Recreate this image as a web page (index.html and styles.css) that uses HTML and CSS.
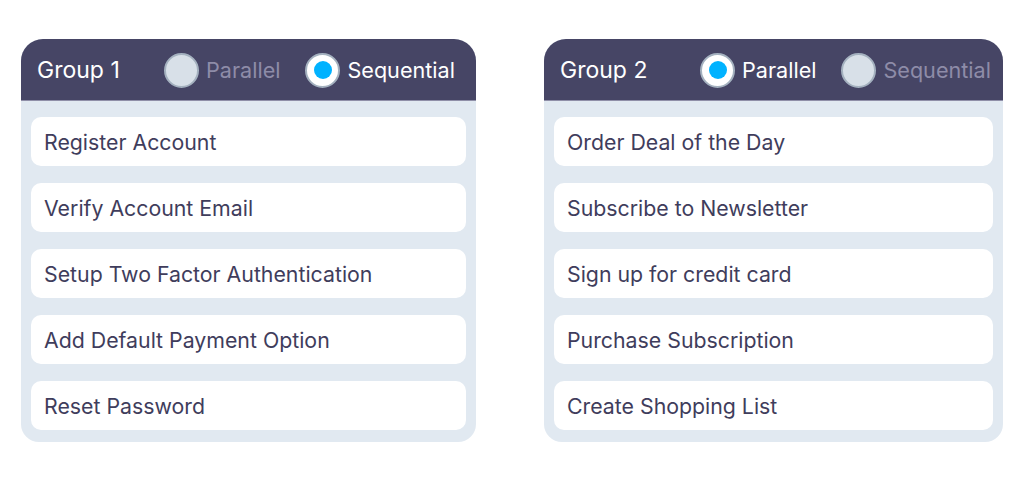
FILE: index.html
```html
<!DOCTYPE html>
<html>
<head>
<meta charset="utf-8">
<link rel="stylesheet" href="styles.css">
</head>
<body>
<div class="page">
  <section class="card card-a">
    <header class="head">
      <span class="title">Group 1</span>
      <div class="radios">
        <label class="radio off"><span class="dot"></span><span class="lbl">Parallel</span></label>
        <label class="radio on"><span class="dot"></span><span class="lbl">Sequential</span></label>
      </div>
    </header>
    <ul class="list">
      <li class="item">Register Account</li>
      <li class="item">Verify Account Email</li>
      <li class="item">Setup Two Factor Authentication</li>
      <li class="item">Add Default Payment Option</li>
      <li class="item">Reset Password</li>
    </ul>
  </section>
  <section class="card card-b">
    <header class="head">
      <span class="title">Group 2</span>
      <div class="radios">
        <label class="radio on"><span class="dot"></span><span class="lbl">Parallel</span></label>
        <label class="radio off"><span class="dot"></span><span class="lbl">Sequential</span></label>
      </div>
    </header>
    <ul class="list">
      <li class="item">Order Deal of the Day</li>
      <li class="item">Subscribe to Newsletter</li>
      <li class="item">Sign up for credit card</li>
      <li class="item">Purchase Subscription</li>
      <li class="item">Create Shopping List</li>
    </ul>
  </section>
</div>
</body>
</html>
```
FILE: styles.css
```css
* { box-sizing: border-box; }
html, body { margin: 0; padding: 0; background: #ffffff; }
body { font-family: "Inter", "Noto Sans", sans-serif; }
.page {
  display: flex;
  padding: 39px 0 0 21px;
  gap: 68px;
  align-items: flex-start;
}
.card {
  background: #e1e9f1;
  border-radius: 22px 22px 18px 18px;
  overflow: hidden;
}
.card-a { width: 455px; }
.card-b { width: 459px; }
.head {
  height: 62px;
  background: #464565;
  display: flex;
  align-items: center;
  padding: 1px 0 0 16px;
  border-bottom: 1px solid #8f8fa8;
}
.title {
  color: #ffffff;
  font-size: 23px;
  width: 84px;
  white-space: nowrap;
}
.card-a .radios { margin-left: 43px; }
.card-b .radios { margin-left: 56px; }
.radios {
  display: flex;
  align-items: center;
  gap: 25px;
}
.radio {
  display: flex;
  align-items: center;
  gap: 7px;
  font-size: 21.6px;
}
.dot {
  flex: none;
  width: 35px;
  height: 35px;
  border-radius: 50%;
  border: 2px solid #a4b1bf;
  background: #d8e0e8;
  position: relative;
}
.on .dot { background: #ffffff; }
.on .dot::after {
  content: "";
  position: absolute;
  left: 50%; top: 50%;
  width: 18px; height: 18px;
  margin: -9px 0 0 -9px;
  border-radius: 50%;
  background: #00b2ff;
}
.on .lbl { color: #ffffff; }
.off .lbl { color: #8e8ca8; }
.list {
  list-style: none;
  margin: 0;
  padding: 16px 10px 12px;
  display: flex;
  flex-direction: column;
  gap: 17px;
}
.item {
  background: #ffffff;
  border-radius: 10px;
  height: 49px;
  display: flex;
  align-items: center;
  padding-left: 13px;
  color: #3f3d5c;
  font-size: 21.3px;
}
```
